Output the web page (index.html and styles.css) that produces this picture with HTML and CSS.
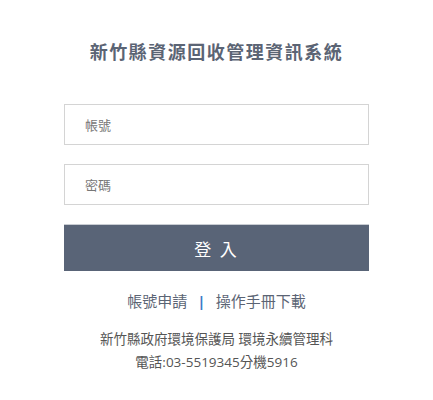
FILE: index.html
```html
<!DOCTYPE html>
<html lang="zh-Hant">
<head>
  <meta charset="UTF-8" />
  <meta name="viewport" content="width=device-width, initial-scale=1.0" />
  <title>新竹縣資源回收管理資訊系統</title>
  <link rel="stylesheet" href="styles.css">
</head>
<body>

  <div class="login">
    <h1 class="title">新竹縣資源回收管理資訊系統</h1>

    <form class="login-form" onsubmit="return false">
      <input type="text" class="field" placeholder="帳號">
      <input type="password" class="field" placeholder="密碼">
      <button type="submit" class="btn-login">登 入</button>
    </form>

    <div class="links">
      <a href="#">帳號申請</a>
      <span class="sep">|</span>
      <a href="#">操作手冊下載</a>
    </div>

    <div class="footer">
      <p>新竹縣政府環境保護局 環境永續管理科</p>
      <p>電話:03-5519345分機5916</p>
    </div>
  </div>

</body>
</html>
```

FILE: styles.css
```css
* {
  box-sizing: border-box;
  margin: 0;
  padding: 0;
  font-family: "Open Sans", "Noto Sans CJK TC", sans-serif;
}

body {
  background: #fff;
  color: #555;
}

.login {
  width: 305px;
  margin: 0 auto;
  padding-top: 38px;
  display: flex;
  flex-direction: column;
  align-items: center;
}

.title {
  font-size: 18px;
  font-weight: bold;
  letter-spacing: 1.5px;
  color: #5b6474;
  line-height: 28px;
}

.login-form {
  width: 100%;
  margin-top: 38px;
  display: flex;
  flex-direction: column;
}

.field {
  width: 100%;
  height: 41px;
  padding: 0 20px;
  border: 1px solid #d4d4d4;
  font-size: 13px;
  color: #333;
  outline: none;
  margin-bottom: 19px;
}

.field::placeholder {
  color: #777;
}

.btn-login {
  width: 100%;
  height: 47px;
  border: none;
  border-top: 1px solid #c9cdd3;
  background-color: #596477;
  color: #fff;
  font-size: 17px;
  letter-spacing: 2px;
  cursor: pointer;
}

.links {
  margin-top: 19px;
  font-size: 15px;
  line-height: 22px;
  display: flex;
  gap: 10px;
}

.links a {
  color: #5b6474;
  text-decoration: none;
}

.links .sep {
  color: #3a7bc8;
  font-weight: bold;
}

.footer {
  margin-top: 16px;
  text-align: center;
  font-size: 13.5px;
  line-height: 23px;
  color: #555;
}
```
